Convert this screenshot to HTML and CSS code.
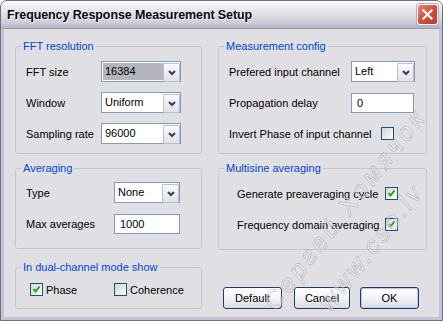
FILE: index.html
```html
<!DOCTYPE html>
<html lang="en">
<head>
  <meta charset="UTF-8" />
  <title>Frequency Response Measurement Setup</title>
  <link rel="stylesheet" href="styles.css">
</head>
<body>
  <div class="window">
    <div class="titlebar">
      <span class="title">Frequency Response Measurement Setup</span>
      <span class="close">
        <svg width="11" height="11" viewBox="0 0 11 11"><path d="M1.5 1.5 L9.5 9.5 M9.5 1.5 L1.5 9.5" stroke="#fff" stroke-width="2.2" stroke-linecap="square"/></svg>
      </span>
    </div>

    <div class="client">
      <div class="col">
        <fieldset class="group tall">
          <legend>FFT resolution</legend>
          <div class="rows fft">
            <div class="row"><label>FFT size</label>
              <div class="combo w80"><span class="val sel">16384</span><span class="drop"><svg width="8" height="6" viewBox="0 0 8 6"><path d="M1 1 L4 4 L7 1" fill="none" stroke="#3c3c58" stroke-width="2"/></svg></span></div>
            </div>
            <div class="row"><label>Window</label>
              <div class="combo w80"><span class="val">Uniform</span><span class="drop"><svg width="8" height="6" viewBox="0 0 8 6"><path d="M1 1 L4 4 L7 1" fill="none" stroke="#3c3c58" stroke-width="2"/></svg></span></div>
            </div>
            <div class="row"><label>Sampling rate</label>
              <div class="combo w80"><span class="val">96000</span><span class="drop"><svg width="8" height="6" viewBox="0 0 8 6"><path d="M1 1 L4 4 L7 1" fill="none" stroke="#3c3c58" stroke-width="2"/></svg></span></div>
            </div>
          </div>
        </fieldset>

        <fieldset class="group avg">
          <legend>Averaging</legend>
          <div class="rows averaging">
            <div class="row"><label>Type</label>
              <div class="combo w66"><span class="val">None</span><span class="drop"><svg width="8" height="6" viewBox="0 0 8 6"><path d="M1 1 L4 4 L7 1" fill="none" stroke="#3c3c58" stroke-width="2"/></svg></span></div>
            </div>
            <div class="row"><label>Max averages</label>
              <div class="edit w66">1000</div>
            </div>
          </div>
        </fieldset>

        <fieldset class="group dual">
          <legend>In dual-channel mode show</legend>
          <div class="checks">
            <div class="check-item"><span class="cb"><svg width="11" height="11" viewBox="0 0 11 11"><path d="M2.5 5 L4.5 7.5 L8.5 2.5" fill="none" stroke="#21a121" stroke-width="2"/></svg></span><span>Phase</span></div>
            <div class="check-item"><span class="cb"></span><span>Coherence</span></div>
          </div>
        </fieldset>
      </div>

      <div class="col">
        <fieldset class="group tall">
          <legend>Measurement config</legend>
          <div class="rows config">
            <div class="row"><label>Prefered input channel</label>
              <div class="combo w64"><span class="val">Left</span><span class="drop"><svg width="8" height="6" viewBox="0 0 8 6"><path d="M1 1 L4 4 L7 1" fill="none" stroke="#3c3c58" stroke-width="2"/></svg></span></div>
            </div>
            <div class="row"><label>Propagation delay</label>
              <div class="edit w63">0</div>
            </div>
            <div class="row"><label class="wide">Invert Phase of input channel</label>
              <span class="cb"></span>
            </div>
          </div>
        </fieldset>

        <fieldset class="group multi">
          <legend>Multisine averaging</legend>
          <div class="rows multisine">
            <div class="row"><label>Generate preaveraging cycle</label>
              <span class="cb"><svg width="11" height="11" viewBox="0 0 11 11"><path d="M2.5 5 L4.5 7.5 L8.5 2.5" fill="none" stroke="#21a121" stroke-width="2"/></svg></span>
            </div>
            <div class="row"><label>Frequency domain averaging</label>
              <span class="cb"><svg width="11" height="11" viewBox="0 0 11 11"><path d="M2.5 5 L4.5 7.5 L8.5 2.5" fill="none" stroke="#21a121" stroke-width="2"/></svg></span>
            </div>
          </div>
        </fieldset>

        <div class="buttons">
          <button class="btn b-default">Default</button>
          <button class="btn b-cancel">Cancel</button>
          <button class="btn b-ok">OK</button>
        </div>
      </div>
    </div>

    <div class="wm wm1">Сергей Хомячок</div>
    <div class="wm wm2">www.cso.lv</div>
  </div>
</body>
</html>
```

FILE: styles.css
```css
body {
  margin: 0;
  background: #fff;
  font-family: "Liberation Sans", Arial, sans-serif;
  font-size: 11px;
  color: #000;
}

.window {
  position: relative;
  width: 443px;
  height: 321px;
  box-sizing: border-box;
  border: 1px solid #6e6e86;
  border-radius: 7px 7px 0 0;
  background: #e0dfe3;
  overflow: hidden;
  display: flex;
  flex-direction: column;
}

.titlebar {
  height: 27px;
  flex: none;
  display: flex;
  align-items: center;
  padding: 0 4px 0 6px;
  background: linear-gradient(to bottom, #fdfdfe 0%, #eeeef3 22%, #dedee7 50%, #cdcdda 80%, #b4b4c6 100%);
}

.title {
  flex: 1;
  font-weight: bold;
  font-size: 12.5px;
  letter-spacing: -0.1px;
  color: #0a0a14;
  text-shadow: 1px 1px 0 rgba(255, 255, 255, 0.7);
}

.close {
  width: 21px;
  height: 21px;
  box-sizing: border-box;
  border: 1px solid #fff;
  border-radius: 3px;
  background: linear-gradient(135deg, #e88a7c, #d2543f 45%, #b83a28);
  display: flex;
  align-items: center;
  justify-content: center;
  box-shadow: 0 0 0 1px #b0b0c0;
}

.client {
  flex: 1;
  border: 3px solid #c4c4d4;
  border-top: 1px solid #9c9cb0;
  display: grid;
  grid-template-columns: 187px 209px;
  grid-template-rows: 269px;
  column-gap: 16px;
  padding: 11px 0 0 11px;
  align-content: start;
}

.col {
  display: flex;
  flex-direction: column;
}

.group {
  margin: 0;
  padding: 0;
  min-width: 0;
  box-sizing: border-box;
  border: 1px solid #c5c5cd;
  border-radius: 3px;
}

.group legend {
  margin-left: 5px;
  padding: 0 2px;
  line-height: 13px;
  color: #0046d5;
}

.tall { height: 114px; }
.avg { height: 87px; margin-top: 8px; }
.multi { height: 88px; margin-top: 8px; }
.dual { height: 48px; margin-top: 12px; }

.rows {
  display: flex;
  flex-direction: column;
  gap: 10px;
  padding: 8px 0 0 10px;
}

.row {
  display: flex;
  align-items: center;
  height: 21px;
}

.fft label { width: 75px; }
.averaging { padding-top: 7px; }
.averaging label { width: 88px; }
.config label { width: 122px; }
.config label.wide { width: 152px; }
.multisine { padding-left: 18px; }
.multisine label { width: 148px; }

.combo {
  display: flex;
  height: 21px;
  box-sizing: border-box;
  border: 1px solid #7f9db9;
  background: #fff;
}

.val {
  flex: 1;
  padding-left: 3px;
  line-height: 19px;
  white-space: nowrap;
}

.val.sel {
  margin: 1px 0 1px 1px;
  padding-left: 2px;
  line-height: 17px;
  background: #b4b4bc;
}

.drop {
  width: 15px;
  margin: 1px 0 0;
  height: 17px;
  border: 1px solid #b8bfd2;
  border-radius: 1px;
  background: linear-gradient(to bottom, #fbfbfd, #e0e0e8);
  display: flex;
  align-items: center;
  justify-content: center;
}

.edit {
  height: 20px;
  box-sizing: border-box;
  border: 1px solid #7f9db9;
  background: #fff;
  padding-left: 5px;
  line-height: 18px;
}

.w80 { width: 80px; }
.w66 { width: 66px; }
.w64 { width: 64px; }
.w63 { width: 63px; }

.cb {
  width: 13px;
  height: 13px;
  flex: none;
  box-sizing: border-box;
  border: 1px solid #1c5180;
  background: linear-gradient(135deg, #d6d6d0, #fdfdfb);
  display: flex;
}

.checks {
  display: flex;
  padding: 9px 0 0 14px;
}

.check-item {
  display: flex;
  align-items: center;
  gap: 3px;
  width: 84px;
}

.buttons {
  display: flex;
  margin-top: auto;
  padding-left: 5px;
}

.btn {
  height: 22px;
  box-sizing: border-box;
  border: 1px solid #1f3d6a;
  border-radius: 3px;
  background: linear-gradient(to bottom, #ffffff, #f2f2f6 55%, #d9d9e5);
  font-family: inherit;
  font-size: 11px;
  color: #000;
  padding: 0;
}

.b-default { width: 59px; }
.b-cancel { width: 56px; margin-left: 12px; }
.b-ok {
  width: 59px;
  margin-left: 10px;
  box-shadow: inset 0 0 0 1px #b9c8ee;
}

.wm {
  position: absolute;
  font-family: "Liberation Sans", sans-serif;
  font-style: italic;
  font-size: 25px;
  letter-spacing: 4px;
  white-space: nowrap;
  color: rgba(255, 255, 255, 0.45);
  -webkit-text-stroke: 0.7px rgba(120, 120, 132, 0.45);
  transform: translate(-50%, -50%) rotate(-52deg);
  pointer-events: none;
}

.wm1 { left: 344px; top: 208px; }
.wm2 { left: 370px; top: 246px; letter-spacing: 3px; }
```
